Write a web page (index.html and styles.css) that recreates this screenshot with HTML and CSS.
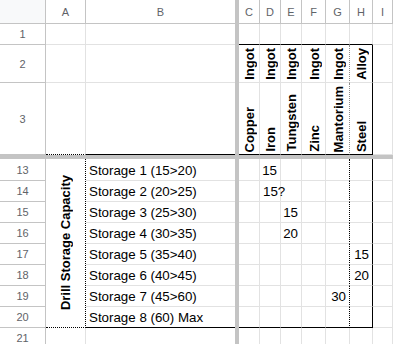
FILE: index.html
```html
<!DOCTYPE html>
<html>
<head>
<meta charset="utf-8">
<link rel="stylesheet" href="styles.css">
</head>
<body>
<div class="sheet">
  <div class="vbar"></div>
  <div class="hbar"></div>
  <div class="cell merged"><span class="rot">Drill Storage Capacity</span></div>

  <!-- header -->
  <div class="cell hd corner"></div>
  <div class="cell hd">A</div>
  <div class="cell hd noright">B</div>
  <div class="cell hd">C</div>
  <div class="cell hd">D</div>
  <div class="cell hd">E</div>
  <div class="cell hd">F</div>
  <div class="cell hd">G</div>
  <div class="cell hd">H</div>
  <div class="cell hd">I</div>

  <!-- row 1 -->
  <div class="cell rh">1</div>
  <div class="cell"></div>
  <div class="cell noright"></div>
  <div class="cell bb"></div>
  <div class="cell bb"></div>
  <div class="cell bb"></div>
  <div class="cell bb"></div>
  <div class="cell bb"></div>
  <div class="cell bb"></div>
  <div class="cell"></div>

  <!-- row 2 -->
  <div class="cell rh">2</div>
  <div class="cell"></div>
  <div class="cell noright"></div>
  <div class="cell vt"><span class="rot">Ingot</span></div>
  <div class="cell vt"><span class="rot">Ingot</span></div>
  <div class="cell vt"><span class="rot">Ingot</span></div>
  <div class="cell vt"><span class="rot">Ingot</span></div>
  <div class="cell vt dot-head"><span class="rot">Ingot</span></div>
  <div class="cell vt br"><span class="rot">Alloy</span></div>
  <div class="cell"></div>

  <!-- row 3 -->
  <div class="cell rh">3</div>
  <div class="cell dotb"></div>
  <div class="cell noright bb"></div>
  <div class="cell vt bb"><span class="rot">Copper</span></div>
  <div class="cell vt bb"><span class="rot">Iron</span></div>
  <div class="cell vt bb"><span class="rot">Tungsten</span></div>
  <div class="cell vt bb"><span class="rot">Zinc</span></div>
  <div class="cell vt bb dot-head"><span class="rot">Mantorium</span></div>
  <div class="cell vt bb br"><span class="rot">Steel</span></div>
  <div class="cell"></div>

  <!-- row 13 -->
  <div class="cell rh">13</div>
  <div class="cell txt noright">Storage 1 (15&gt;20)</div>
  <div class="cell"></div>
  <div class="cell num">15</div>
  <div class="cell"></div>
  <div class="cell"></div>
  <div class="cell dotr"></div>
  <div class="cell br"></div>
  <div class="cell"></div>

  <!-- row 14 -->
  <div class="cell rh">14</div>
  <div class="cell txt noright">Storage 2 (20&gt;25)</div>
  <div class="cell"></div>
  <div class="cell txt">15?</div>
  <div class="cell"></div>
  <div class="cell"></div>
  <div class="cell dotr"></div>
  <div class="cell br"></div>
  <div class="cell"></div>

  <!-- row 15 -->
  <div class="cell rh">15</div>
  <div class="cell txt noright">Storage 3 (25&gt;30)</div>
  <div class="cell"></div>
  <div class="cell"></div>
  <div class="cell num">15</div>
  <div class="cell"></div>
  <div class="cell dotr"></div>
  <div class="cell br"></div>
  <div class="cell"></div>

  <!-- row 16 -->
  <div class="cell rh">16</div>
  <div class="cell txt noright">Storage 4 (30&gt;35)</div>
  <div class="cell"></div>
  <div class="cell"></div>
  <div class="cell num">20</div>
  <div class="cell"></div>
  <div class="cell dotr"></div>
  <div class="cell br"></div>
  <div class="cell"></div>

  <!-- row 17 -->
  <div class="cell rh">17</div>
  <div class="cell txt noright">Storage 5 (35&gt;40)</div>
  <div class="cell"></div>
  <div class="cell"></div>
  <div class="cell"></div>
  <div class="cell"></div>
  <div class="cell dotr"></div>
  <div class="cell num br">15</div>
  <div class="cell"></div>

  <!-- row 18 -->
  <div class="cell rh">18</div>
  <div class="cell txt noright">Storage 6 (40&gt;45)</div>
  <div class="cell"></div>
  <div class="cell"></div>
  <div class="cell"></div>
  <div class="cell"></div>
  <div class="cell dotr"></div>
  <div class="cell num br">20</div>
  <div class="cell"></div>

  <!-- row 19 -->
  <div class="cell rh">19</div>
  <div class="cell txt noright">Storage 7 (45&gt;60)</div>
  <div class="cell"></div>
  <div class="cell"></div>
  <div class="cell"></div>
  <div class="cell"></div>
  <div class="cell num dotr">30</div>
  <div class="cell br"></div>
  <div class="cell"></div>

  <!-- row 20 -->
  <div class="cell rh">20</div>
  <div class="cell txt noright bb">Storage 8 (60) Max</div>
  <div class="cell bb"></div>
  <div class="cell bb"></div>
  <div class="cell bb"></div>
  <div class="cell bb"></div>
  <div class="cell bb dotr"></div>
  <div class="cell bb br"></div>
  <div class="cell"></div>

  <!-- row 21 -->
  <div class="cell rh">21</div>
  <div class="cell"></div>
  <div class="cell noright"></div>
  <div class="cell"></div>
  <div class="cell"></div>
  <div class="cell"></div>
  <div class="cell"></div>
  <div class="cell"></div>
  <div class="cell"></div>
  <div class="cell"></div>
</div>
</body>
</html>
```
FILE: styles.css
```css
html, body {
  margin: 0;
  padding: 0;
  background: #ffffff;
  overflow: hidden;
}

.sheet {
  display: grid;
  grid-template-columns: 46px 40px 149px 4px 21px 21px 21px 24px 24px 23px 1fr;
  grid-template-rows: 24px 21px 38px 72px 4px 22px 21px 21px 21px 21px 21px 21px 21px 21px;
  width: 393px;
  font-family: "Liberation Sans", Arial, sans-serif;
  color: #000;
}

.vbar {
  grid-column: 4;
  grid-row: 1 / -1;
  background: #c4c4c4;
}

.hbar {
  grid-column: 1 / -1;
  grid-row: 5;
  background: #c4c4c4;
}

.cell {
  box-sizing: border-box;
  border-right: 1px solid #e2e2e2;
  border-bottom: 1px solid #e2e2e2;
  display: flex;
  align-items: flex-end;
  min-width: 0;
  white-space: nowrap;
  font-size: 13.33px;
  line-height: 16px;
  padding-bottom: 1px;
}

.hd, .rh {
  border-right-color: #c4c4c4;
  border-bottom-color: #c4c4c4;
  justify-content: center;
  align-items: center;
  font-size: 11px;
  color: #5f6368;
  padding-bottom: 0;
}

.corner {
  background: #f8f9fa;
}

.noright {
  border-right: none;
}

.txt {
  padding-left: 3px;
}

.num {
  justify-content: flex-end;
  padding-right: 3px;
}

.bb {
  border-bottom: 1px solid #000;
}

.br {
  border-right: 1px solid #000;
}

.dotr {
  border-right: 1px dotted #000;
}

.dot-head {
  border-right: 1px dotted #8a8a8a;
}

.dotb {
  border-bottom: 1px dotted #000;
}

.vt {
  justify-content: center;
  padding-left: 1px;
  padding-bottom: 2px;
}

.rot {
  writing-mode: vertical-rl;
  transform: rotate(180deg);
  font-weight: bold;
  font-size: 13px;
  line-height: 15px;
}

.merged {
  grid-column: 2;
  grid-row: 6 / span 8;
  justify-content: center;
  align-items: center;
  padding-bottom: 0;
  border-right: 1px dotted #000;
  border-bottom: 1px dotted #000;
}
```
